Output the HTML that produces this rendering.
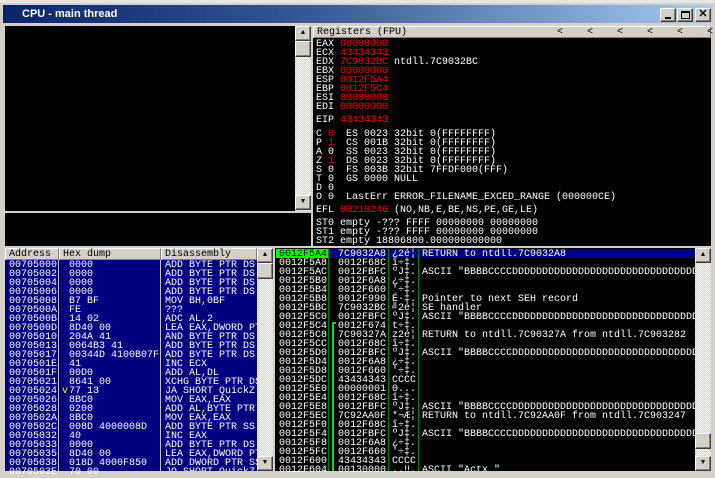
<!DOCTYPE html>
<html><head><style>
*{margin:0;padding:0;box-sizing:border-box}
body{width:715px;height:476px;background:#d4d0c8;position:relative;overflow:hidden;font-family:"Liberation Mono",monospace;font-size:10px;line-height:9px}
.a{position:absolute}
pre{font-family:"Liberation Mono",monospace;font-size:10px;line-height:9px;white-space:pre;position:absolute;margin-top:1px}
.w{color:#fff}.r{color:#f00}
.btn{position:absolute;background:#d4d0c8;border:1px solid;border-color:#fff #404040 #404040 #fff;box-shadow:inset -1px -1px #808080}
.sb{position:absolute;background:repeating-conic-gradient(#fff 0 25%,#d4d0c8 0 50%) 0 0/2px 2px}
.hdr{position:absolute;background:#d4d0c8;color:#000;border:1px solid;border-color:#fff #808080 #808080 #fff;height:12px;padding-left:3px;line-height:11px}
.lt{position:absolute;top:0}
</style></head><body>
<div class="a" style="left:0;top:0;width:715px;height:3px;background:#e8e6e0"></div>
<div class="a" style="left:3px;top:5px;width:709px;height:18px;background:linear-gradient(90deg,#0a246a,#3a5a98 45%,#a6caf0)"></div>
<div class="a" style="left:22px;top:6px;color:#fff;font:bold 11px/16px 'Liberation Sans',sans-serif">CPU - main thread</div>
<div class="btn" style="left:660px;top:8px;width:16px;height:14px"><div class="a" style="left:4px;top:8px;width:6px;height:2px;background:#000"></div></div>
<div class="btn" style="left:677px;top:8px;width:16px;height:14px"><div class="a" style="left:3px;top:2px;width:9px;height:8px;border:1px solid #000;border-top-width:2px"></div></div>
<div class="btn" style="left:695px;top:8px;width:16px;height:14px;font:bold 11px/11px 'Liberation Sans',sans-serif;text-align:center">✕</div>

<div class="a" style="left:5px;top:26px;width:290px;height:185px;background:#000"></div>
<div class="sb" style="left:295px;top:26px;width:16px;height:185px"></div>
<div class="btn" style="left:295px;top:26px;width:16px;height:15px;font-size:7px;line-height:12px;text-align:center">▲</div>
<div class="btn" style="left:295px;top:41px;width:16px;height:16px"></div>
<div class="btn" style="left:295px;top:195px;width:16px;height:15px;font-size:7px;line-height:12px;text-align:center">▼</div>
<div class="a" style="left:5px;top:213px;width:306px;height:33px;background:#000"></div>

<div class="a" style="left:313px;top:26px;width:398px;height:220px;background:#000"></div>
<div class="hdr" style="left:313px;top:26px;width:398px;height:12px">Registers (FPU)<span class="lt" style="left:243px">&lt;</span><span class="lt" style="left:273px">&lt;</span><span class="lt" style="left:303px">&lt;</span><span class="lt" style="left:333px">&lt;</span><span class="lt" style="left:363px">&lt;</span><span class="lt" style="left:393px">&lt;</span></div>
<pre class="w" style="left:316px;top:39px">EAX <span class="r">00000000</span>
ECX <span class="r">43434343</span>
EDX <span class="r">7C9032BC</span> ntdll.7C9032BC
EBX <span class="r">00000000</span>
ESP <span class="r">0012F5A4</span>
EBP <span class="r">0012F5C4</span>
ESI <span class="r">00000000</span>
EDI <span class="r">00000000</span></pre>
<pre class="w" style="left:316px;top:115px">EIP <span class="r">43434343</span></pre>
<pre class="w" style="left:316px;top:129px">C <span class="r">0</span>  ES 0023 32bit 0(FFFFFFFF)
P <span class="r">1</span>  CS 001B 32bit 0(FFFFFFFF)
A 0  SS 0023 32bit 0(FFFFFFFF)
Z <span class="r">1</span>  DS 0023 32bit 0(FFFFFFFF)
S 0  FS 003B 32bit 7FFDF000(FFF)
T 0  GS 0000 NULL
D 0
O 0  LastErr ERROR_FILENAME_EXCED_RANGE (000000CE)</pre>
<pre class="w" style="left:316px;top:205px">EFL <span class="r">00210246</span> (NO,NB,E,BE,NS,PE,GE,LE)</pre>
<pre class="w" style="left:316px;top:218px">ST0 empty -??? FFFF 00000000 00000000
ST1 empty -??? FFFF 00000000 00000000
ST2 empty 18806800.000000000000</pre>

<div class="a" style="left:5px;top:248px;width:252px;height:223px;background:#000080"></div>
<div class="hdr" style="left:5px;top:248px;width:54px">Address</div>
<div class="hdr" style="left:59px;top:248px;width:102px">Hex dump</div>
<div class="hdr" style="left:161px;top:248px;width:96px">Disassembly</div>
<div class="a" style="left:58px;top:260px;width:1px;height:211px;background:#c0c0c0"></div>
<div class="a" style="left:160px;top:260px;width:1px;height:211px;background:#c0c0c0"></div>
<pre class="w" style="left:9px;top:260px">00705000
00705002
00705004
00705006
00705008
0070500A
0070500B
0070500D
00705010
00705013
00705017
0070501E
0070501F
00705021
00705024
00705026
00705028
0070502A
0070502C
00705032
00705033
00705035
00705038
0070503E</pre>
<pre class="w" style="left:69px;top:260px">0000
0000
0000
0000
B7 BF
FE
14 02
8D40 00
204A 41
0064B3 41
00344D 4100B07F
41
00D0
8641 00
77 13
8BC0
0200
8BC0
008D 4000008D
40
0000
8D40 00
018D 4000F850
70 00</pre>
<pre class="a" style="left:62px;top:386px;color:#ff0">v</pre>
<div class="a" style="left:165px;top:260px;width:92px;height:211px;overflow:hidden"><pre class="w" style="left:0;top:0">ADD BYTE PTR DS:
ADD BYTE PTR DS:
ADD BYTE PTR DS:
ADD BYTE PTR DS:
MOV BH,0BF
???
ADC AL,2
LEA EAX,DWORD PTR
AND BYTE PTR DS:
ADD BYTE PTR DS:
ADD BYTE PTR DS:
INC ECX
ADD AL,DL
XCHG BYTE PTR DS
JA SHORT QuickZ
MOV EAX,EAX
ADD AL,BYTE PTR
MOV EAX,EAX
ADD BYTE PTR SS:
INC EAX
ADD BYTE PTR DS:
LEA EAX,DWORD PTR
ADD DWORD PTR SS
JO SHORT QuickZ</pre></div>
<div class="sb" style="left:257px;top:248px;width:16px;height:223px"></div>
<div class="btn" style="left:257px;top:248px;width:16px;height:15px;font-size:7px;line-height:12px;text-align:center">▲</div>
<div class="btn" style="left:257px;top:263px;width:16px;height:16px"></div>
<div class="btn" style="left:257px;top:456px;width:16px;height:15px;font-size:7px;line-height:12px;text-align:center">▼</div>

<div class="a" style="left:275px;top:248px;width:420px;height:223px;background:#000"></div>
<div class="a" style="left:276px;top:249px;width:52px;height:9px;background:#00ff00"></div>
<div class="a" style="left:329px;top:249px;width:366px;height:9px;background:#000080"></div>
<div class="a" style="left:328px;top:249px;width:1px;height:222px;background:#008000"></div>
<div class="a" style="left:388px;top:249px;width:1px;height:222px;background:#008000"></div>
<div class="a" style="left:418px;top:249px;width:1px;height:222px;background:#008000"></div>
<div class="a" style="left:332px;top:322px;width:2px;height:149px;background:#00e000"></div>
<div class="a" style="left:332px;top:322px;width:4px;height:2px;background:#00e000"></div>
<pre class="w" style="left:279px;top:249px"><span style="color:#000">0012F5A4</span>
0012F5A8
0012F5AC
0012F5B0
0012F5B4
0012F5B8
0012F5BC
0012F5C0
0012F5C4
0012F5C8
0012F5CC
0012F5D0
0012F5D4
0012F5D8
0012F5DC
0012F5E0
0012F5E4
0012F5E8
0012F5EC
0012F5F0
0012F5F4
0012F5F8
0012F5FC
0012F600
0012F604</pre>
<pre class="w" style="left:338px;top:249px">7C9032A8
0012F68C
0012FBFC
0012F6A8
0012F660
0012F990
7C9032BC
0012FBFC
0012F674
7C90327A
0012F68C
0012FBFC
0012F6A8
0012F660
43434343
00000001
0012F68C
0012FBFC
7C92AA0F
0012F68C
0012FBFC
0012F6A8
0012F660
43434343
00130000</pre>
<pre class="w" style="left:392px;top:249px">¿2é¦
î÷‡.
ºJ‡.
¿÷‡.
'÷‡.
É·‡.
╝2é¦
ºJ‡.
t÷‡.
z2é¦
î÷‡.
ºJ‡.
¿÷‡.
'÷‡.
CCCC
0...
î÷‡.
ºJ‡.
*¬Æ¦
î÷‡.
ºJ‡.
¿÷‡.
'÷‡.
CCCC
..‼.</pre>
<div class="a" style="left:422px;top:249px;width:273px;height:222px;overflow:hidden"><pre class="w" style="left:0;top:0">RETURN to ntdll.7C9032A8

ASCII "BBBBCCCCDDDDDDDDDDDDDDDDDDDDDDDDDDDDDDDDDD"


Pointer to next SEH record
SE handler
ASCII "BBBBCCCCDDDDDDDDDDDDDDDDDDDDDDDDDDDDDDDDDD"

RETURN to ntdll.7C90327A from ntdll.7C903282

ASCII "BBBBCCCCDDDDDDDDDDDDDDDDDDDDDDDDDDDDDDDDDD"





ASCII "BBBBCCCCDDDDDDDDDDDDDDDDDDDDDDDDDDDDDDDDDD"
RETURN to ntdll.7C92AA0F from ntdll.7C903247

ASCII "BBBBCCCCDDDDDDDDDDDDDDDDDDDDDDDDDDDDDDDDDD"



ASCII "Actx "</pre></div>
<div class="sb" style="left:695px;top:248px;width:16px;height:223px"></div>
<div class="btn" style="left:695px;top:248px;width:16px;height:15px;font-size:7px;line-height:12px;text-align:center">▲</div>
<div class="btn" style="left:695px;top:433px;width:16px;height:16px"></div>
<div class="btn" style="left:695px;top:456px;width:16px;height:15px;font-size:7px;line-height:12px;text-align:center">▼</div>
</body></html>
